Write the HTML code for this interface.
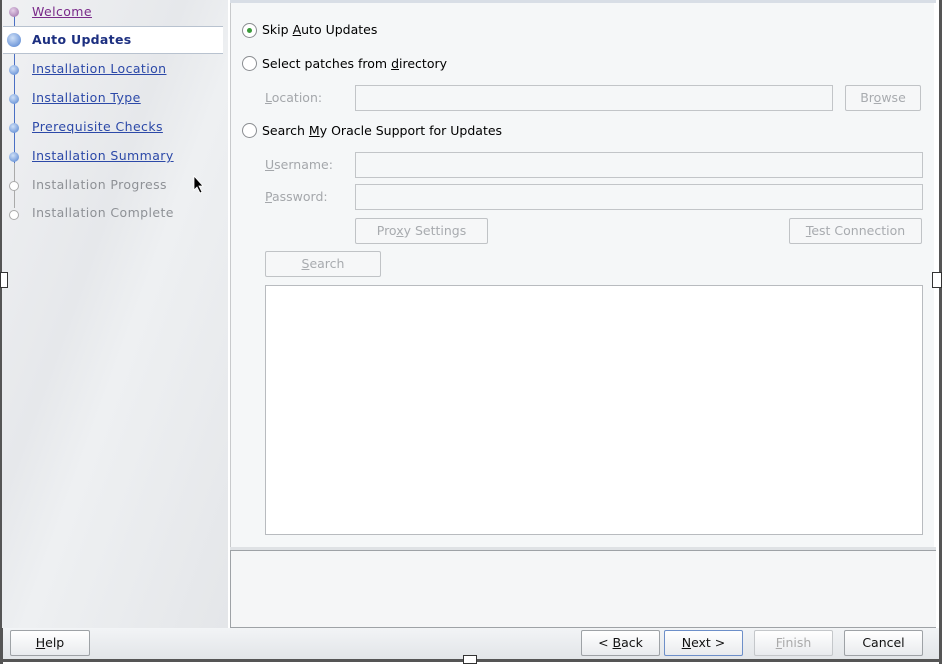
<!DOCTYPE html>
<html><head><style>
*{box-sizing:border-box;margin:0;padding:0}
body{width:942px;height:664px;overflow:hidden;background:#fff;font-family:"DejaVu Sans","Liberation Sans",sans-serif;font-size:12.5px;position:relative}
.a{position:absolute}
.side{left:2px;top:0;width:226px;height:628px;background:linear-gradient(110deg,#f0f1f3 0%,#e6e8eb 40%,#eef0f2 55%,#e4e6e9 100%)}
.step{position:absolute;left:32px;font-size:12.5px;letter-spacing:0.4px;text-decoration:underline;color:#2c49a8}
.dot{position:absolute;left:9px;width:10px;height:10px;border-radius:50%;background:radial-gradient(circle at 40% 35%,#cfe0f7,#4e7fcf)}
.main{left:230px;top:2px;width:704px;height:545px;background:#f5f7f8;border-left:1px solid #c8cacc}
.in{position:absolute;height:26px;border:1px solid #c2c5c8;background:#f5f7f8}
.btn{position:absolute;height:26px;border:1px solid #c0c3c6;border-radius:2px;background:#f6f7f8;color:#a8abaf;text-align:center;line-height:24px}
.lbl{position:absolute;color:#a4a7ab}
.rad{position:absolute;left:242px;width:15px;height:15px;border-radius:50%;border:1px solid #8a8d91;background:#fff}
.bb{position:absolute;top:630px;height:26px;border:1px solid #9ea2a6;border-radius:2px;background:linear-gradient(#fff,#e9ebee);text-align:center;line-height:24px;color:#111}
</style></head><body>
<div class="a" style="left:0;top:0;width:3px;height:664px;background:#555"></div>
<div class="a" style="left:939px;top:0;width:3px;height:664px;background:#555"></div>
<div class="a side"></div>
<div class="a" style="left:14px;top:12px;width:1px;height:195px;background:#4a6fc4"></div>
<div class="a" style="left:14px;top:163px;width:1px;height:45px;background:#aaa"></div>
<div class="dot" style="top:7px;background:radial-gradient(circle at 40% 35%,#e5d0e8,#9a6aa5)"></div>
<span class="step" style="top:4px;color:#7a2a8a">Welcome</span>
<div class="a" style="left:3px;top:26px;width:220px;height:28px;background:#fff;border-top:1px solid #b8c2cf;border-bottom:1px solid #b8c2cf"></div>
<div class="dot" style="left:7px;top:33px;width:14px;height:14px"></div>
<span class="step" style="top:32px;text-decoration:none;font-weight:bold;color:#1c2f80;letter-spacing:0.3px">Auto Updates</span>
<div class="dot" style="top:65px"></div><span class="step" style="top:61px">Installation Location</span>
<div class="dot" style="top:94px"></div><span class="step" style="top:90px">Installation Type</span>
<div class="dot" style="top:123px"></div><span class="step" style="top:119px">Prerequisite Checks</span>
<div class="dot" style="top:152px"></div><span class="step" style="top:148px">Installation Summary</span>
<div class="dot" style="top:181px;background:#fff;border:1px solid #aaa"></div><span class="step" style="top:177px;text-decoration:none;color:#8e9196">Installation Progress</span>
<div class="dot" style="top:210px;background:#fff;border:1px solid #aaa"></div><span class="step" style="top:205px;text-decoration:none;color:#8e9196">Installation Complete</span>
<svg class="a" style="left:193px;top:175px" width="12" height="20" viewBox="0 0 12 20"><path d="M1 1 L1 15 L4 12 L7 18 L9 17 L6 11 L10 11 Z" fill="#000" stroke="#fff" stroke-width="0.8"/></svg>
<div class="a main"></div>
<div class="a" style="left:230px;top:0;width:706px;height:3px;background:#d8dee6"></div>
<div class="rad" style="top:23px"><div class="a" style="left:4px;top:4px;width:5px;height:5px;border-radius:50%;background:#3a9a3a"></div></div>
<span class="a" style="left:262px;top:22px">Skip <u>A</u>uto Updates</span>
<div class="rad" style="top:56px"></div>
<span class="a" style="left:262px;top:56px">Select patches from <u>d</u>irectory</span>
<span class="lbl" style="left:265px;top:90px"><u>L</u>ocation:</span>
<div class="in" style="left:355px;top:85px;width:478px"></div>
<div class="btn" style="left:845px;top:85px;width:76px">Br<u>o</u>wse</div>
<div class="rad" style="top:123px"></div>
<span class="a" style="left:262px;top:123px">Search <u>M</u>y Oracle Support for Updates</span>
<span class="lbl" style="left:265px;top:157px"><u>U</u>sername:</span>
<div class="in" style="left:355px;top:152px;width:568px"></div>
<span class="lbl" style="left:265px;top:189px"><u>P</u>assword:</span>
<div class="in" style="left:355px;top:184px;width:568px"></div>
<div class="btn" style="left:355px;top:218px;width:133px">Pro<u>x</u>y Settings</div>
<div class="btn" style="left:789px;top:218px;width:133px"><u>T</u>est Connection</div>
<div class="btn" style="left:265px;top:251px;width:116px"><u>S</u>earch</div>
<div class="a" style="left:265px;top:285px;width:658px;height:250px;background:#fff;border:1px solid #b8bbbf"></div>
<div class="a" style="left:230px;top:547px;width:706px;height:4px;background:#dfe2e5;border-bottom:1px solid #9ea2a6"></div>
<div class="a" style="left:230px;top:551px;width:706px;height:77px;background:#f5f6f7;border-left:1px solid #9ea2a6;border-bottom:1px solid #9ea2a6"></div>
<div class="a" style="left:3px;top:628px;width:936px;height:32px;background:linear-gradient(#f2f4f6,#e2e5e8)"></div>
<div class="a" style="left:3px;top:659px;width:936px;height:3px;background:#555"></div>
<div class="a" style="left:463px;top:655px;width:14px;height:9px;background:#fff;border:1px solid #333"></div>
<div class="a" style="left:932px;top:272px;width:10px;height:16px;background:#fff;border:1px solid #333"></div>
<div class="a" style="left:0;top:272px;width:8px;height:16px;background:#fff;border:1px solid #333"></div>
<div class="bb" style="left:10px;width:80px"><u>H</u>elp</div>
<div class="bb" style="left:581px;width:79px">&lt; <u>B</u>ack</div>
<div class="bb" style="left:664px;width:79px;border-color:#6d8fc9"><u>N</u>ext &gt;</div>
<div class="bb" style="left:754px;width:79px;color:#aaa;border-color:#c4c7ca"><u>F</u>inish</div>
<div class="bb" style="left:844px;width:79px">Cancel</div>
</body></html>
